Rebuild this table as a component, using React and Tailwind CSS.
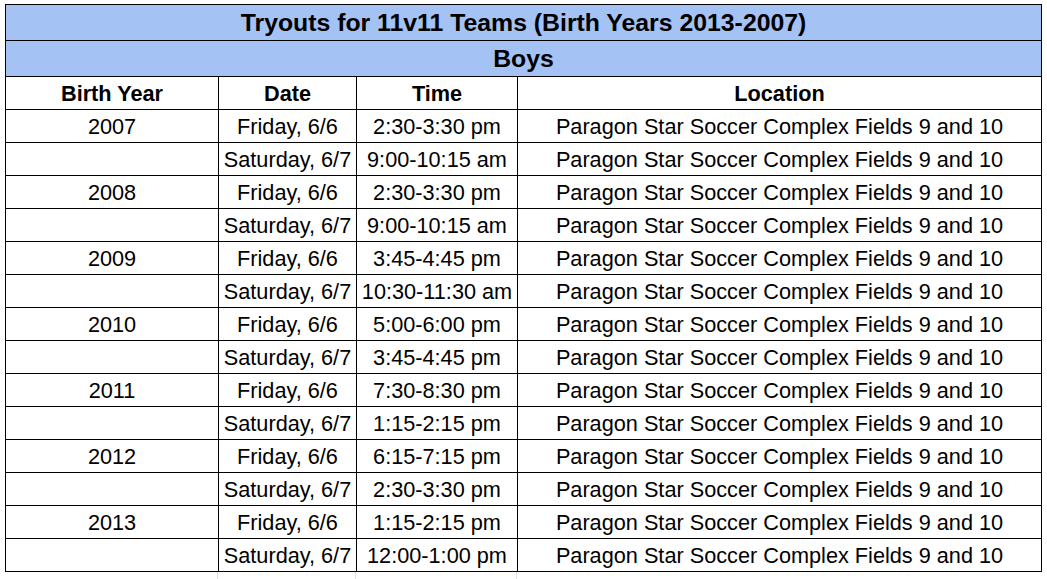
const rows = [
  ['2007', 'Friday, 6/6', '2:30-3:30 pm'],
  ['', 'Saturday, 6/7', '9:00-10:15 am'],
  ['2008', 'Friday, 6/6', '2:30-3:30 pm'],
  ['', 'Saturday, 6/7', '9:00-10:15 am'],
  ['2009', 'Friday, 6/6', '3:45-4:45 pm'],
  ['', 'Saturday, 6/7', '10:30-11:30 am'],
  ['2010', 'Friday, 6/6', '5:00-6:00 pm'],
  ['', 'Saturday, 6/7', '3:45-4:45 pm'],
  ['2011', 'Friday, 6/6', '7:30-8:30 pm'],
  ['', 'Saturday, 6/7', '1:15-2:15 pm'],
  ['2012', 'Friday, 6/6', '6:15-7:15 pm'],
  ['', 'Saturday, 6/7', '2:30-3:30 pm'],
  ['2013', 'Friday, 6/6', '1:15-2:15 pm'],
  ['', 'Saturday, 6/7', '12:00-1:00 pm'],
];

const LOCATION = 'Paragon Star Soccer Complex Fields 9 and 10';

function Cell({ children, bold }) {
  return (
    <div className={`h-[33px] pt-[2px] flex items-center justify-center border-r border-b border-black whitespace-nowrap ${bold ? 'font-bold' : ''}`}>
      {children}
    </div>
  );
}

export default function App() {
  return (
    <div className="w-[1047px] h-[579px] bg-white pt-[4px] pl-[5px] text-black text-[21.7px] font-['Liberation_Sans',Arial,sans-serif] overflow-hidden">
      <div className="w-[1037px] border-l border-t border-black">
        <div className="h-[36px] flex items-center justify-center bg-[#a4c2f4] border-r border-b border-black font-bold text-[24.8px]">
          Tryouts for 11v11 Teams (Birth Years 2013-2007)
        </div>
        <div className="h-[36px] flex items-center justify-center bg-[#a4c2f4] border-r border-b border-black font-bold text-[24.8px]">
          Boys
        </div>
        <div className="grid grid-cols-[213px_138px_161px_524px]">
          <Cell bold>Birth Year</Cell>
          <Cell bold>Date</Cell>
          <Cell bold>Time</Cell>
          <Cell bold>Location</Cell>
          {rows.map(([year, date, time], i) => (
            <div key={i} className="contents">
              <Cell>{year}</Cell>
              <Cell>{date}</Cell>
              <Cell>{time}</Cell>
              <Cell>{LOCATION}</Cell>
            </div>
          ))}
        </div>
      </div>
      <div className="flex h-[8px]">
        <div className="w-[213px] border-r border-[#e2e2e2]" />
        <div className="w-[138px] border-r border-[#e2e2e2]" />
        <div className="w-[161px] border-r border-[#e2e2e2]" />
      </div>
    </div>
  );
}
